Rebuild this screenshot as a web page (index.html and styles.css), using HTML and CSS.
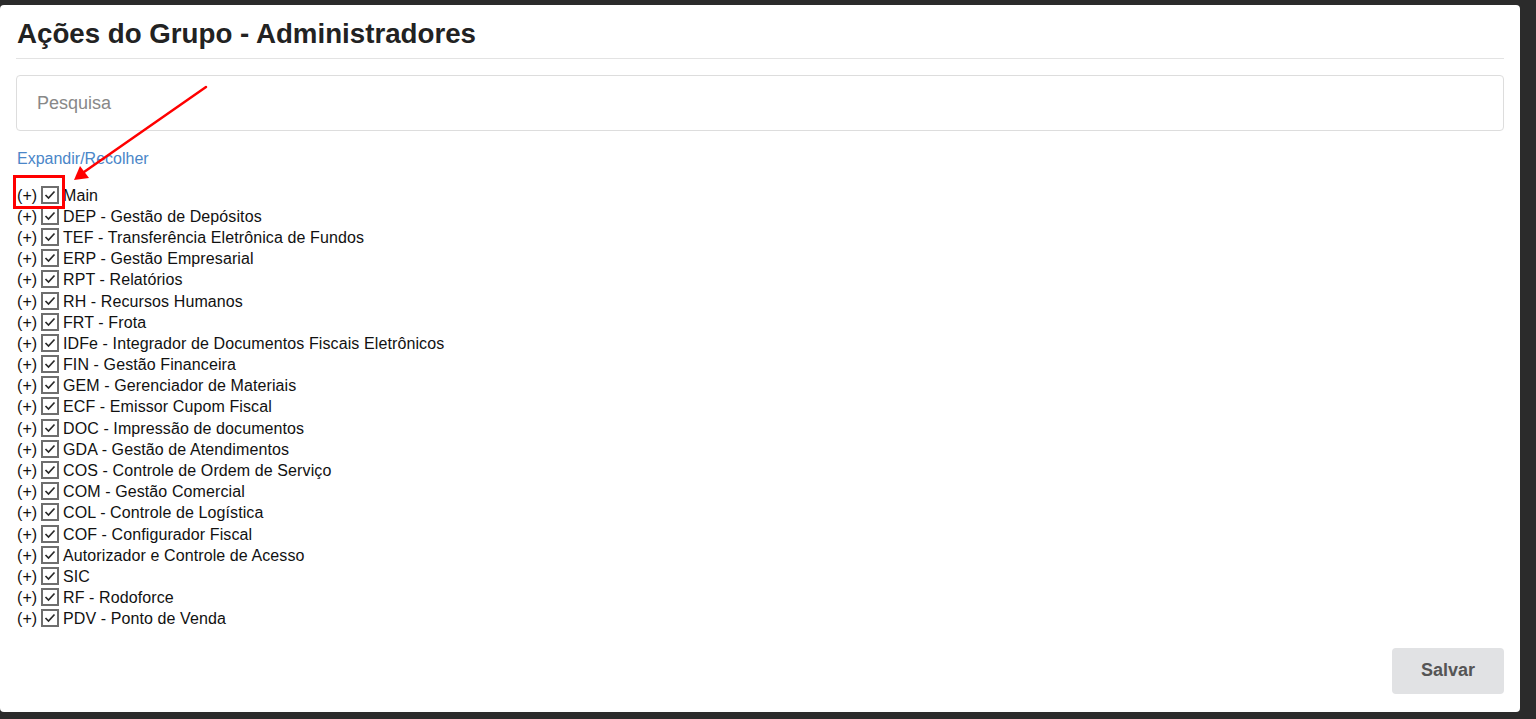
FILE: index.html
```html
<!DOCTYPE html>
<html lang="pt-BR">
<head>
<meta charset="utf-8">
<title>Ações do Grupo - Administradores</title>
<link rel="stylesheet" href="styles.css">
</head>
<body>
<div class="panel">
  <h1 class="title">Ações do Grupo - Administradores</h1>
  <div class="search"><span class="placeholder">Pesquisa</span></div>
  <a class="toggle" href="#">Expandir/Recolher</a>
  <ul class="tree" id="tree"></ul>
  <div class="actions"><button class="btn-save">Salvar</button></div>
</div>
<svg class="annotation" width="1536" height="719" viewBox="0 0 1536 719">
  <rect x="14.5" y="176.5" width="49" height="31" fill="none" stroke="#ff0000" stroke-width="3"/>
  <line x1="206" y1="87" x2="84" y2="172" stroke="#ff0000" stroke-width="2.5" stroke-linecap="round"/>
  <polygon points="74,180 80,166 89,178" fill="#ff0000"/>
</svg>
<script src="app.js"></script>
</body>
</html>
```
FILE: app.js
```js
var items = [
  "Main",
  "DEP - Gestão de Depósitos",
  "TEF - Transferência Eletrônica de Fundos",
  "ERP - Gestão Empresarial",
  "RPT - Relatórios",
  "RH - Recursos Humanos",
  "FRT - Frota",
  "IDFe - Integrador de Documentos Fiscais Eletrônicos",
  "FIN - Gestão Financeira",
  "GEM - Gerenciador de Materiais",
  "ECF - Emissor Cupom Fiscal",
  "DOC - Impressão de documentos",
  "GDA - Gestão de Atendimentos",
  "COS - Controle de Ordem de Serviço",
  "COM - Gestão Comercial",
  "COL - Controle de Logística",
  "COF - Configurador Fiscal",
  "Autorizador e Controle de Acesso",
  "SIC",
  "RF - Rodoforce",
  "PDV - Ponto de Venda"
];
var tree = document.getElementById("tree");
items.forEach(function (t) {
  var li = document.createElement("li");
  li.className = "node";
  li.innerHTML =
    '<span class="plus">(+)</span>' +
    '<span class="check"><svg width="14" height="14" viewBox="0 0 14 14"><path d="M2.5 7 L5.5 10 L11.5 3.5" fill="none" stroke="#2a2a2a" stroke-width="1.7"/></svg></span>' +
    '<span class="label"></span>';
  li.querySelector(".label").textContent = t;
  tree.appendChild(li);
});
```
FILE: styles.css
```css
html, body {
  margin: 0;
  padding: 0;
}
body {
  background: #2b2b2b;
  font-family: "Liberation Sans", Arial, sans-serif;
  color: #222;
  height: 719px;
  overflow: hidden;
  position: relative;
}
.panel {
  background: #fff;
  margin: 5px 16px 0 0;
  height: 707px;
  box-sizing: border-box;
  padding: 14px 16px 0 16px;
  border-radius: 4px;
  display: flex;
  flex-direction: column;
}
.title {
  margin: 0;
  font-size: 27.7px;
  line-height: 30px;
  font-weight: bold;
  color: #222;
  padding: 0 0 9px 1px;
  border-bottom: 1px solid #e3e3e3;
}
.search {
  margin-top: 16px;
  height: 56px;
  box-sizing: border-box;
  border: 1px solid #ddd;
  border-radius: 4px;
  display: flex;
  align-items: center;
  padding-left: 20px;
}
.placeholder {
  font-size: 18px;
  color: #888;
}
.toggle {
  margin-top: 18px;
  font-size: 16px;
  line-height: 20px;
  color: #4a86c8;
  text-decoration: none;
  align-self: flex-start;
  padding-left: 1px;
}
.tree {
  list-style: none;
  margin: 16px 0 0 0;
  padding: 0 0 0 1px;
}
.node {
  height: 21.2px;
  display: flex;
  align-items: center;
  font-size: 16px;
  letter-spacing: 0.1px;
  color: #111;
  white-space: nowrap;
}
.plus {
  width: 24px;
}
.check {
  width: 18px;
  height: 18px;
  box-sizing: border-box;
  border: 2px solid #6e6e6e;
  display: flex;
  align-items: center;
  justify-content: center;
  margin-right: 4px;
  margin-top: -2px;
}
.check svg {
  display: block;
}
.actions {
  margin-top: 18px;
  display: flex;
  justify-content: flex-end;
}
.btn-save {
  width: 112px;
  height: 46px;
  border: none;
  border-radius: 4px;
  background: #e1e2e4;
  color: #555;
  font-family: "Liberation Sans", Arial, sans-serif;
  font-weight: bold;
  font-size: 18px;
}
.annotation {
  position: absolute;
  left: 0;
  top: 0;
  pointer-events: none;
}
```
